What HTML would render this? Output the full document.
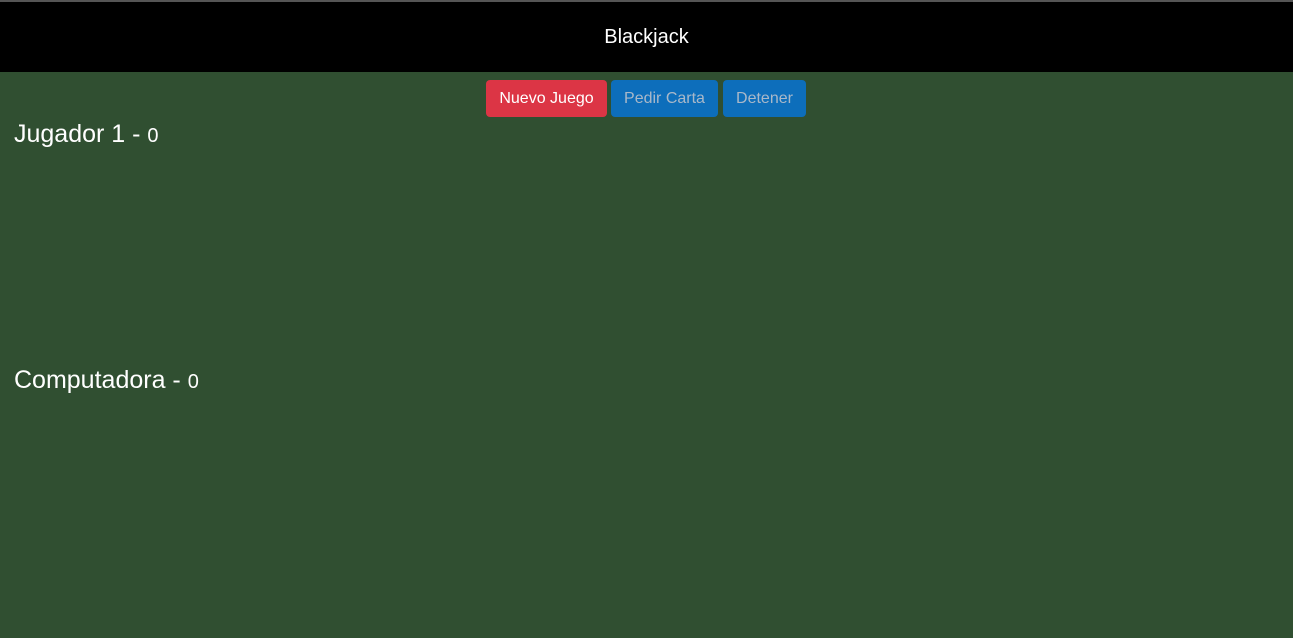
<!DOCTYPE html>
<html><head><style>
body{margin:0;width:1293px;height:638px;background:#304f31;font-family:"Liberation Sans",sans-serif;overflow:hidden;position:relative}
.top{position:absolute;top:0;left:0;width:1293px;height:2px;background:#555}
.hdr{position:absolute;top:2px;left:0;width:1293px;height:70px;background:#000;color:#fff;font-size:20px;text-align:center;line-height:70px}
.btn{position:absolute;top:80px;height:37px;border-radius:4px;font-size:16px;line-height:38px;text-align:center}
.r{background:#dc3545;color:#fff;left:486px;width:121px}
.b{background:#0d6ebb;color:#a9b8c9}
h2{position:absolute;left:14px;margin:0;font-weight:normal;font-size:25px;color:#fff}
h2 small{font-size:20px}
</style></head><body>
<div class="top"></div>
<div class="hdr">Blackjack</div>
<div class="btn r">Nuevo Juego</div>
<div class="btn b" style="left:611px;width:107px">Pedir Carta</div>
<div class="btn b" style="left:723px;width:83px">Detener</div>
<h2 style="top:120px">Jugador 1 - <small>0</small></h2>
<h2 style="top:366px">Computadora - <small>0</small></h2>
</body></html>
